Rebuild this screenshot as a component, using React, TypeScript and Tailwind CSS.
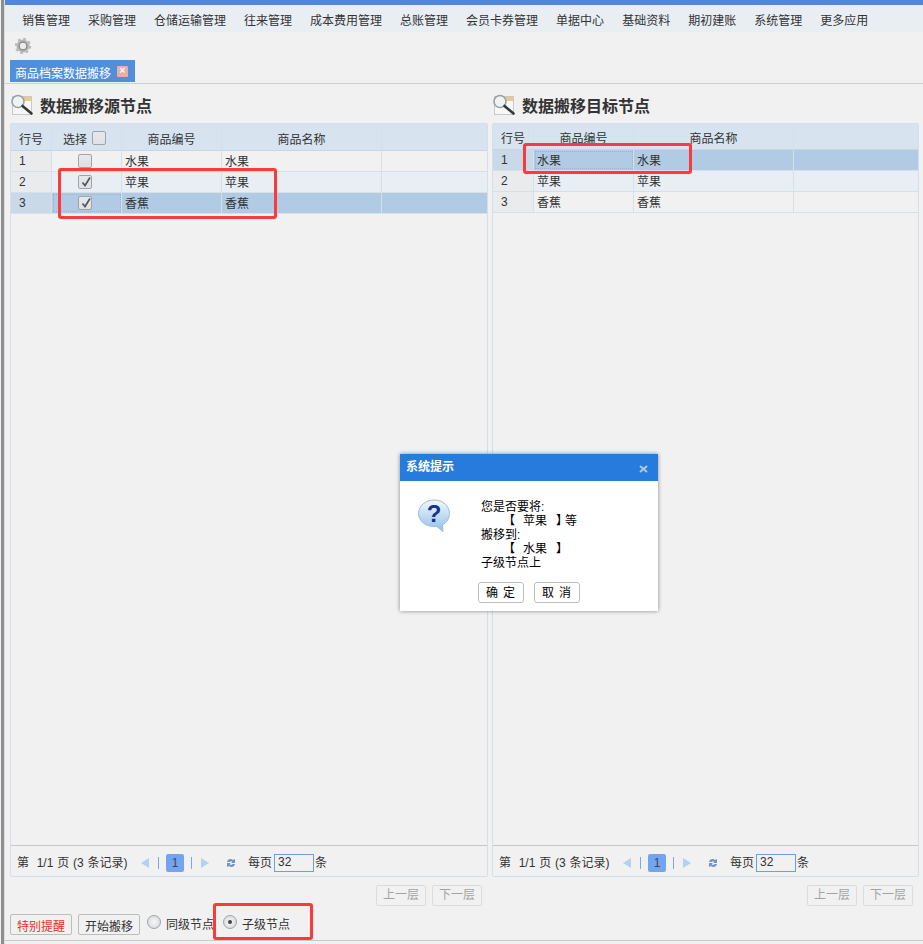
import React from 'react';

const navItems = ['销售管理', '采购管理', '仓储运输管理', '往来管理', '成本费用管理', '总账管理', '会员卡券管理', '单据中心', '基础资料', '期初建账', '系统管理', '更多应用'];

const rows = [
  { no: '1', name: '水果' },
  { no: '2', name: '苹果' },
  { no: '3', name: '香蕉' },
];

const Gear = () => (
  <svg width="18" height="18" viewBox="0 0 18 18">
    <circle cx="9" cy="9" r="6.500" fill="#b4b4b4" />
    <circle cx="9" cy="9" r="7" fill="none" stroke="#bcbcbc" strokeWidth="2.400" strokeDasharray="2.700 2.800" />
    <circle cx="9" cy="9" r="3.800" fill="#ececec" stroke="#858585" strokeWidth="1.200" />
  </svg>
);

const SearchDoc = () => (
  <svg width="24" height="22" viewBox="0 0 24 22">
    <rect x="2.500" y="2.500" width="19" height="18" fill="#f7f7f5" stroke="#c9c9c5" />
    <rect x="13" y="3" width="8" height="4" fill="#ecc88f" />
    <circle cx="8" cy="7.500" r="6" fill="#eef3f6" stroke="#9aa1a6" strokeWidth="1.600" />
    <path d="M12.500 12l9 7.500" stroke="#34383b" strokeWidth="2.600" strokeLinecap="round" />
  </svg>
);

const QuestionBubble = () => (
  <svg width="34" height="34" viewBox="0 0 34 34">
    <defs>
      <linearGradient id="bubble" x1="0" y1="0" x2="0" y2="1">
        <stop offset="0" stopColor="#f2f8fd" />
        <stop offset="1" stopColor="#8fc0e8" />
      </linearGradient>
    </defs>
    <path
      d="M17 1c8.800 0 15.500 5.800 15.500 13.500 0 5-2.800 9-7 11.300l.5 6.700-6.500-5.200c-.8.100-1.600.2-2.500.2C8.200 27.500 1.500 21.700 1.500 14.500S8.200 1 17 1z"
      fill="url(#bubble)"
      stroke="#9dbcd6"
    />
    <text x="17" y="23" textAnchor="middle" fontSize="24" fontWeight="700" fontFamily="Liberation Sans, sans-serif" fill="#15348f">?</text>
  </svg>
);

const Check = ({ on }: { on?: boolean }) => (
  <span className="relative flex h-[14px] w-[14px] items-center justify-center rounded-[2px] border border-[#a3a3a3] bg-[linear-gradient(#e6e9ec,#dde2e7)]">
    {on && (
      <svg width="12" height="12" viewBox="0 0 12 12" className="absolute left-[1px] top-0">
        <path d="M2.500 6.500l2.500 3L10 1.500" fill="none" stroke="#555" strokeWidth="1.700" />
      </svg>
    )}
  </span>
);

const Radio = ({ on }: { on?: boolean }) => (
  <span className="mb-[5px] flex h-[14px] w-[14px] items-center justify-center rounded-full border border-[#9aa5b0] bg-[radial-gradient(#f8f8f8,#cfd3d7)]">
    {on && <span className="h-[4px] w-[4px] rounded-full bg-[#444]" />}
  </span>
);

const Pager = () => (
  <div className="flex h-[31px] items-center border-t border-[#c4c8cc] pl-[6px] pt-[4px] text-[12px] text-[#333]">
    <span className="w-[111px] whitespace-pre [word-spacing:0.5px]">第  1/1 页 (3 条记录)</span>
    <svg width="10" height="12" viewBox="0 0 10 12" className="ml-[12px]">
      <path d="M9 1v10L1 6z" fill="#b7d0f2" />
    </svg>
    <span className="ml-[8px] h-[12px] w-px bg-[#7da7e0]" />
    <span className="ml-[7px] flex h-[18px] w-[18px] items-center justify-center rounded-[2px] bg-[#73a4ef] text-[#3c4a60]">1</span>
    <span className="ml-[7px] h-[12px] w-px bg-[#7da7e0]" />
    <svg width="10" height="12" viewBox="0 0 10 12" className="ml-[8px]">
      <path d="M1 1v10l8-5z" fill="#b7d0f2" />
    </svg>
    <svg width="10" height="12" viewBox="0 0 10 12" className="ml-[16px]">
      <path d="M1 5c.500-3 4-4 6-2l2-1v4H5l1.500-1.300C5.500 3.800 4 4 3.500 5zM9 7c-.500 3-4 4-6 2l-2 1V6h4L3.500 7.300c1 .9 2.500.7 3-.3z" fill="#6f93c4" />
    </svg>
    <span className="ml-[12px]">每页</span>
    <span className="ml-[2px] flex h-[18px] w-[40px] items-center border border-[#6f9fe0] bg-[#f1f1f1] pb-[2px] pl-[3px]">32</span>
    <span className="ml-px">条</span>
  </div>
);

const Cell = ({ className, children }: { className: string; children?: React.ReactNode }) => (
  <div className={`flex shrink-0 items-center border-r border-[#d5e0ea] ${className}`}>{children}</div>
);

const LayerButtons = () => (
  <div className="flex h-[36px] items-center justify-end gap-[6px] pr-[6px] text-[12px] text-[#a3a3a3]">
    <span className="flex h-[21px] w-[50px] items-center justify-center rounded-[2px] border border-[#dcdcdc]">上一层</span>
    <span className="flex h-[21px] w-[50px] items-center justify-center rounded-[2px] border border-[#dcdcdc]">下一层</span>
  </div>
);

const PanelTitle = ({ text }: { text: string }) => (
  <div className="flex h-[39px] items-center gap-[6px] pt-[3px] text-[16px] font-bold text-[#333]">
    <SearchDoc />
    <span className="font-['Noto_Sans_CJK_SC',sans-serif]">{text}</span>
  </div>
);

const SourcePanel = () => (
  <div className="flex w-[478px] flex-col">
    <PanelTitle text="数据搬移源节点" />
    <div className="flex h-[754px] flex-col rounded-[2px] border border-[#d3e0ec] text-[12px] text-[#333]">
      <div className="flex h-[27px] shrink-0 border-b border-[#c9d5e0] bg-[#d7e4ef]">
        <Cell className="w-[41px] justify-center border-[#c9d5e0] pt-[5px]">行号</Cell>
        <Cell className="w-[70px] justify-center gap-[5px] border-[#aab2ba] pr-[4px] pt-[5px]">
          选择
          <span className="mb-[3px]">
            <Check />
          </span>
        </Cell>
        <Cell className="w-[100px] justify-center border-[#c9d5e0] pt-[5px]">商品编号</Cell>
        <Cell className="w-[160px] justify-center border-[#c9d5e0] pt-[5px]">商品名称</Cell>
      </div>
      {rows.map((r, i) => (
        <div
          key={r.no}
          className={`flex h-[21px] shrink-0 border-b border-[#d5e0ea] ${i === 2 ? 'bg-[#b0cbe3]' : i === 1 ? 'bg-[#e8eef4]' : ''}`}
        >
          <Cell className={`w-[41px] pl-[8px] ${i === 2 ? 'bg-[#c9d9e8]' : 'bg-[#eaebed]'}`}>{r.no}</Cell>
          <Cell className={`w-[70px] justify-center border-[#aab2ba] pr-[4px] ${i === 2 ? 'outline-1 -outline-offset-2 outline-dotted outline-[#9db3c8]' : ''}`}>
            <Check on={i > 0} />
          </Cell>
          <Cell className="w-[100px] pl-[3px] pt-[2px]">{r.name}</Cell>
          <Cell className="w-[160px] pl-[3px] pt-[2px]">{r.name}</Cell>
        </div>
      ))}
      <div className="flex-1" />
      <Pager />
    </div>
    <LayerButtons />
  </div>
);

const TargetPanel = () => (
  <div className="flex w-[427px] flex-col">
    <PanelTitle text="数据搬移目标节点" />
    <div className="flex h-[754px] flex-col rounded-[2px] border border-[#d3e0ec] text-[12px] text-[#333]">
      <div className="flex h-[26px] shrink-0 border-b border-[#c9d5e0] bg-[#d7e4ef]">
        <Cell className="w-[41px] justify-center border-[#c9d5e0] pt-[4px]">行号</Cell>
        <Cell className="w-[100px] justify-center border-[#c9d5e0] pt-[4px]">商品编号</Cell>
        <Cell className="w-[160px] justify-center border-[#c9d5e0] pt-[4px]">商品名称</Cell>
      </div>
      {rows.map((r, i) => (
        <div
          key={r.no}
          className={`flex h-[21px] shrink-0 border-b border-[#d5e0ea] ${i === 0 ? 'bg-[#b0cbe3]' : i === 1 ? 'bg-[#e8eef4]' : ''}`}
        >
          <Cell className={`w-[41px] pl-[8px] ${i === 0 ? 'bg-[#c9d9e8]' : 'bg-[#eaebed]'}`}>{r.no}</Cell>
          <Cell className={`w-[100px] pl-[3px] pt-[2px] ${i === 0 ? 'outline-1 -outline-offset-2 outline-dotted outline-[#9db3c8]' : ''}`}>{r.name}</Cell>
          <Cell className="w-[160px] pl-[3px] pt-[2px]">{r.name}</Cell>
        </div>
      ))}
      <div className="flex-1" />
      <Pager />
    </div>
    <LayerButtons />
  </div>
);

export default function App() {
  return (
    <div className="relative flex h-[944px] w-[923px] overflow-hidden bg-[#f1f1f1] font-['Liberation_Sans','Noto_Sans_CJK_SC',sans-serif]">
      {/* left frame edge */}
      <div className="ml-px w-[3px] shrink-0 bg-[#8e8e8e]" />
      <div className="w-px shrink-0 bg-[#dcdcdc]" />

      <div className="flex min-w-0 flex-1 flex-col">
        {/* top strip + menu */}
        <div className="h-[5px] shrink-0 bg-[#4f88db]" />
        <div className="flex h-[27px] shrink-0 items-center bg-[#e9eef3] pl-[17px] pt-[4px] text-[12px] text-[#333]">
          <div className="flex gap-[18px]">
            {navItems.map(n => (
              <span key={n}>{n}</span>
            ))}
          </div>
        </div>

        <div className="flex h-[28px] shrink-0 items-center pl-[9px]">
          <Gear />
        </div>
        {/* tab */}
        <div className="h-[24px] shrink-0 border-b border-[#d0d0d0] pl-[5px]">
          <div className="flex h-[22px] w-[125px] items-center gap-[6px] bg-[#4f8fdc] pl-[5px] text-[12px] text-white">
            <span className="pt-[6px] leading-[14px]">商品档案数据搬移</span>
            <span className="flex h-[11px] w-[11px] items-center justify-center rounded-[1px] bg-[#efaaaa] text-[10px] leading-none font-bold text-white">×</span>
          </div>
        </div>

        <div className="flex shrink-0 gap-[4px] pl-[5px]">
          <SourcePanel />
          <TargetPanel />
        </div>

        {/* bottom actions */}
        <div className="-mt-[2px] flex h-[27px] shrink-0 items-center pl-[5px] text-[12px] text-[#333]">
          <span className="flex h-[21px] w-[62px] items-center justify-center rounded-[2px] border border-[#bdbdbd] pt-[4px] text-[#f02c2c]">特别提醒</span>
          <span className="ml-[6px] flex h-[21px] w-[62px] items-center justify-center rounded-[2px] border border-[#bdbdbd] pt-[4px]">开始搬移</span>
          <span className="ml-[7px] flex items-center gap-[5px]">
            <Radio />
            同级节点
          </span>
          <span className="ml-[9px] flex items-center gap-[5px]">
            <Radio on />
            子级节点
          </span>
        </div>
        <div className="mt-[2px] border-t border-[#c8c8c8]" />
      </div>

      {/* dialog */}
      <div className="absolute left-[400px] top-[454px] w-[258px] bg-white text-[12px] leading-[14px] text-black shadow-[0_0_4px_rgba(0,0,0,0.45)]">
        <div className="flex h-[27px] items-center justify-between bg-[#277bdc] pb-[2px] pl-[6px] pr-[10px] font-bold text-white">
          <span>系统提示</span>
          <svg width="9" height="8" viewBox="0 0 9 8" className="mt-[4px]">
            <path d="M1 1l7 6M8 1L1 7" stroke="#b9c6d4" strokeWidth="2" />
          </svg>
        </div>
        <div className="flex h-[130px] pl-[17px] pt-[18px]">
          <QuestionBubble />
          <div className="ml-[30px] flex flex-col pt-px">
            <span>您是否要将:</span>
            <span className="flex pl-[22px]">
              <span>【</span>
              <span className="ml-[8px]">苹果</span>
              <span className="ml-[9px] [font-feature-settings:'halt']">】</span>
              <span className="ml-[3px]">等</span>
            </span>
            <span>搬移到:</span>
            <span className="flex pl-[22px]">
              <span>【</span>
              <span className="ml-[8px]">水果</span>
              <span className="ml-[9px]">】</span>
            </span>
            <span>子级节点上</span>
          </div>
        </div>
        <div className="absolute bottom-[8px] left-[78px] flex gap-[10px]">
          <span className="flex h-[21px] w-[46px] items-center justify-center rounded-[3px] border border-[#bdbdbd] pl-[4px] tracking-[5px]">确定</span>
          <span className="flex h-[21px] w-[46px] items-center justify-center rounded-[3px] border border-[#bdbdbd] pl-[4px] tracking-[5px]">取消</span>
        </div>
      </div>

      {/* red annotations */}
      <div className="pointer-events-none absolute left-[58px] top-[168px] h-[51px] w-[219px] rounded-[3px] border-[3px] border-[#fb3a3a]" />
      <div className="pointer-events-none absolute left-[523px] top-[143px] h-[31px] w-[169px] rounded-[3px] border-[3px] border-[#fb3a3a]" />
      <div className="pointer-events-none absolute left-[213px] top-[903px] h-[37px] w-[100px] rounded-[3px] border-[3px] border-[#fb3a3a]" />
    </div>
  );
}
